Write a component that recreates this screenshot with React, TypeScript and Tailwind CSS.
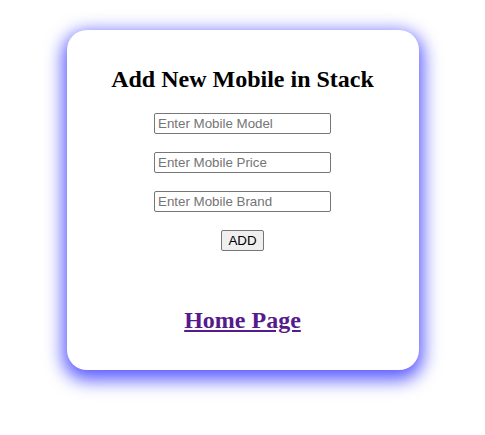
import React from 'react';

const fields = ['Enter Mobile Model', 'Enter Mobile Price', 'Enter Mobile Brand'];

const App: React.FC = () => {
  return (
    <div className="min-h-[435px] w-full bg-white pt-[30px]">
      <div className="mx-auto flex h-[340px] w-[352px] flex-col items-center rounded-[20px] bg-white pt-[35px] shadow-[0_6px_18px_4px_rgba(0,0,255,0.65)]">
        <h2 className="font-['Liberation_Serif',serif] text-[24px] font-bold leading-[28px] text-black">
          Add New Mobile in Stack
        </h2>
        <form className="mt-[20px] flex flex-col items-center gap-[18px]" onSubmit={(e) => e.preventDefault()}>
          {fields.map((f) => (
            <input
              key={f}
              type="text"
              placeholder={f}
              className="h-[21px] w-[177px] rounded-[2px] border border-[#767676] px-[3px] font-['Liberation_Sans',sans-serif] text-[13.33px] text-black placeholder:text-[#757575]"
            />
          ))}
          <button
            type="submit"
            className="h-[21px] rounded-[2px] border border-[#767676] bg-[#efefef] px-[6px] font-['Liberation_Sans',sans-serif] text-[13.33px] leading-none text-black"
          >
            ADD
          </button>
        </form>
        <a
          href="#"
          className="mt-[55px] font-['Liberation_Serif',serif] text-[24px] font-bold leading-[28px] text-[#551a8b] underline"
        >
          Home Page
        </a>
      </div>
    </div>
  );
};

export default App;
